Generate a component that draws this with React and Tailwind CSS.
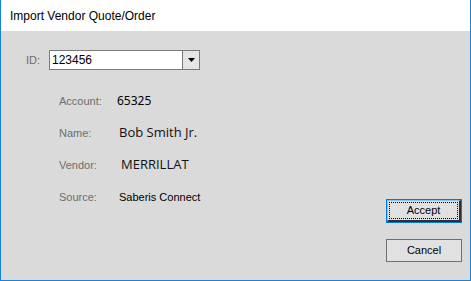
import React from 'react';

const labelCls = 'w-[58px] shrink-0 text-[11px] text-[#6d6d6d]';

function InfoRow({ label, children, valueCls }) {
  return (
    <div className="flex h-[32px] items-center pl-[58px]">
      <span className={labelCls}>{label}</span>
      <span className={valueCls}>{children}</span>
    </div>
  );
}

export default function App() {
  return (
    <div
      className="flex h-[281px] w-[471px] flex-col border-x border-b border-[#1883d7] bg-[#dadada]"
      style={{ fontFamily: '"Liberation Sans", Arial, sans-serif' }}
    >
      <div className="flex h-[31px] shrink-0 items-center bg-white pl-[9px] text-[12px] text-black">
        Import Vendor Quote/Order
      </div>

      <div className="flex flex-1">
        <div className="flex-1 pt-[19px]">
          {/* ID combo */}
          <div className="flex items-center pl-[25px]">
            <span className="w-[23px] text-[11px] text-[#6d6d6d]">ID:</span>
            <div className="flex h-[20px] w-[151px] border border-[#7a7a7a] bg-white">
              <span className="flex-1 pl-[2px] text-[12px] leading-[18px] text-black">123456</span>
              <div className="flex w-[17px] items-center justify-center border-l border-[#7a7a7a] bg-[#e5e5e5]">
                <svg width="7" height="4" viewBox="0 0 7 4">
                  <path d="M0 0h7L3.5 4z" fill="#000" />
                </svg>
              </div>
            </div>
          </div>

          <div className="mt-[15px]">
            <InfoRow label="Account:" valueCls="text-[12px] text-black [font-family:'Noto_Sans',sans-serif]">65325</InfoRow>
            <InfoRow label="Name:" valueCls="pl-[2px] text-[13px] text-[#111] [font-family:'Open_Sans',sans-serif]">Bob Smith Jr.</InfoRow>
            <InfoRow label="Vendor:" valueCls="pl-[4px] text-[13px] text-[#111] [font-family:'Open_Sans',sans-serif]">MERRILLAT</InfoRow>
            <InfoRow label="Source:" valueCls="pl-[2px] text-[11px] text-black">Saberis Connect</InfoRow>
          </div>
        </div>

        <div className="flex flex-col pr-[8px] pt-[168px]">
          <button className="h-[24px] w-[76px] border border-[#0078d7] bg-[#e1e1e1] text-[11px] text-black">
            <span className="flex h-full w-full border-t border-l border-b-2 border-r-2 border-t-[#8cc4f0] border-l-[#8cc4f0] border-b-[#303030] border-r-[#303030] p-[1px]">
              <span className="flex h-full w-full items-center justify-center border border-dotted border-black">Accept</span>
            </span>
          </button>
          <button className="mt-[16px] h-[23px] w-[76px] border border-[#707070] bg-[#e1e1e1] text-[11px] text-black">
            Cancel
          </button>
        </div>
      </div>
    </div>
  );
}
